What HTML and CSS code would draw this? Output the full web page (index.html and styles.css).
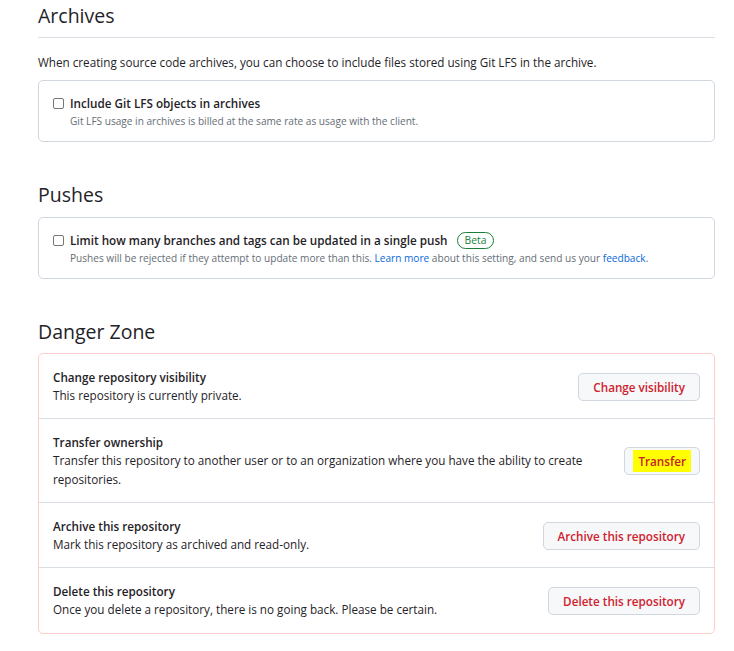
FILE: index.html
```html
<!DOCTYPE html>
<html>
<head>
<meta charset="utf-8">
<link rel="stylesheet" href="styles.css">
</head>
<body>
<main class="page">
  <h2 class="heading heading-ruled">Archives</h2>
  <p class="intro">When creating source code archives, you can choose to include files stored using Git LFS in the archive.</p>
  <div class="box">
    <label class="check">
      <span class="checkbox"></span>
      <span class="check-text">
        <span class="check-label">Include Git LFS objects in archives</span>
        <span class="note">Git LFS usage in archives is billed at the same rate as usage with the client.</span>
      </span>
    </label>
  </div>

  <h2 class="heading heading-gap">Pushes</h2>
  <div class="box">
    <label class="check">
      <span class="checkbox"></span>
      <span class="check-text">
        <span class="check-label">Limit how many branches and tags can be updated in a single push <span class="beta">Beta</span></span>
        <span class="note">Pushes will be rejected if they attempt to update more than this. <a class="link">Learn more</a> about this setting, and send us your <a class="link">feedback</a>.</span>
      </span>
    </label>
  </div>

  <h2 class="heading heading-gap">Danger Zone</h2>
  <div class="danger">
    <div class="row">
      <div class="row-text">
        <div class="row-title">Change repository visibility</div>
        <div class="row-desc">This repository is currently private.</div>
      </div>
      <button class="btn">Change visibility</button>
    </div>
    <div class="row">
      <div class="row-text">
        <div class="row-title">Transfer ownership</div>
        <div class="row-desc">Transfer this repository to another user or to an organization where you have the ability to create repositories.</div>
      </div>
      <button class="btn btn-narrow"><span class="highlight">Transfer</span></button>
    </div>
    <div class="row">
      <div class="row-text">
        <div class="row-title">Archive this repository</div>
        <div class="row-desc">Mark this repository as archived and read-only.</div>
      </div>
      <button class="btn">Archive this repository</button>
    </div>
    <div class="row">
      <div class="row-text">
        <div class="row-title">Delete this repository</div>
        <div class="row-desc">Once you delete a repository, there is no going back. Please be certain.</div>
      </div>
      <button class="btn">Delete this repository</button>
    </div>
  </div>
</main>
</body>
</html>
```

FILE: styles.css
```css
* { box-sizing: border-box; }
html, body { margin: 0; padding: 0; background: #ffffff; }
body {
  font-family: "Open Sans", "Noto Sans", "Liberation Sans", sans-serif;
  color: #1f2328;
  font-size: 11.7px;
}
.page {
  width: 677px;
  margin-left: 38px;
  padding-bottom: 20px;
}
.heading {
  margin: 0;
  font-weight: 400;
  font-size: 19.5px;
  line-height: 26px;
  color: #1f2328;
}
.heading-ruled {
  padding-top: 3px;
  padding-bottom: 8px;
  border-bottom: 1px solid #d8dee4;
}
.heading-gap {
  margin-top: 40px;
  margin-bottom: 9px;
}
.heading-gap:last-of-type {
  margin-bottom: 8px;
}
.intro {
  margin: 15px 0 9px;
  line-height: 18px;
  color: #1f2328;
}
.box {
  border: 1px solid #d0d7de;
  border-radius: 5px;
  padding: 13px 14px 12px;
}
.check {
  display: flex;
  align-items: flex-start;
  gap: 6px;
}
.checkbox {
  width: 11px;
  height: 11px;
  margin-top: 4px;
  border: 1px solid #767676;
  border-radius: 2px;
  background: #fff;
  flex: none;
}
.check-text {
  display: flex;
  flex-direction: column;
}
.check-label {
  font-weight: 600;
  font-size: 11.7px;
  line-height: 19px;
  display: flex;
  align-items: center;
  gap: 9px;
}
.note {
  font-size: 10.1px;
  line-height: 16px;
  color: #656d76;
}
.link {
  color: #0969da;
  text-decoration: none;
}
.beta {
  display: inline-block;
  font-size: 10.3px;
  font-weight: 500;
  line-height: 15px;
  padding: 0 7px;
  border: 1px solid #1a7f37;
  border-radius: 10px;
  color: #1a7f37;
}
.danger {
  border: 1px solid #ffcecb;
  border-radius: 5px;
}
.row {
  display: flex;
  align-items: center;
  gap: 16px;
  padding: 14px 14px 13px;
  border-top: 1px solid #d8dee4;
}
.row:first-child { border-top: none; }
.row:last-child { padding-bottom: 14px; }
.row-text { flex: 1; }
.row-title {
  font-weight: 600;
  line-height: 18px;
}
.row-desc {
  line-height: 19px;
}
.btn {
  flex: none;
  font-family: inherit;
  font-size: 11.7px;
  font-weight: 600;
  color: #cf222e;
  background: #f6f8fa;
  border: 1px solid #d0d7de;
  border-radius: 5px;
  height: 28px;
  padding: 0 14px;
  cursor: pointer;
}
.btn-narrow { padding: 0 8px; }
.highlight {
  background: #ffff00;
  padding: 3px 5px;
  color: #c5222a;
}
```
